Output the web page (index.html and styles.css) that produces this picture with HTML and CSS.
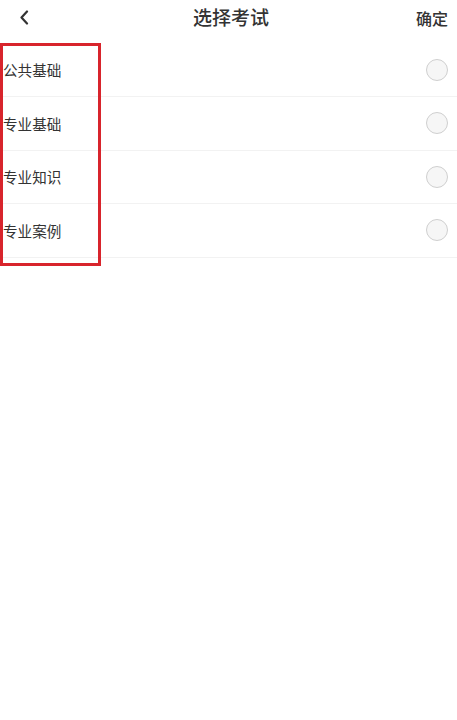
FILE: index.html
```html
<!DOCTYPE html>
<html lang="zh-CN">
<head>
<meta charset="utf-8">
<title>选择考试</title>
<link rel="stylesheet" href="styles.css">
</head>
<body>
<div class="page">
  <header class="header">
    <span class="back">
      <svg width="10" height="15" viewBox="0 0 10 15"><path d="M8 1.5 L2.5 7.5 L8 13.5" fill="none" stroke="#333" stroke-width="2.2" stroke-linecap="round" stroke-linejoin="round"/></svg>
    </span>
    <h1 class="title">选择考试</h1>
    <span class="confirm">确定</span>
  </header>
  <ul class="list">
    <li class="row"><span class="label">公共基础</span><span class="radio"></span></li>
    <li class="row"><span class="label">专业基础</span><span class="radio"></span></li>
    <li class="row"><span class="label">专业知识</span><span class="radio"></span></li>
    <li class="row"><span class="label">专业案例</span><span class="radio"></span></li>
  </ul>
  <div class="highlight"></div>
</div>
</body>
</html>
```

FILE: styles.css
```css
html, body {
  margin: 0;
  padding: 0;
  background: #fff;
}
body {
  font-family: "Noto Sans CJK SC", "Noto Sans", sans-serif;
  color: #333;
}
.page {
  position: relative;
  width: 457px;
  min-height: 720px;
}
.header {
  height: 43.5px;
  box-sizing: border-box;
  padding: 7px 9px 0 19px;
  display: grid;
  grid-template-columns: 1fr auto 1fr;
  align-items: start;
}
.back {
  height: 20px;
  display: flex;
  align-items: center;
}
.back svg {
  display: block;
  margin-top: 1px;
}
.title {
  margin: 0 0 0 -5px;
  font-size: 19px;
  line-height: 20px;
  font-weight: 500;
  color: #333;
}
.confirm {
  justify-self: end;
  font-size: 16px;
  line-height: 22px;
  font-weight: 500;
  color: #333;
}
.list {
  list-style: none;
  margin: 0;
  padding: 0;
}
.row {
  height: 53.5px;
  box-sizing: border-box;
  border-bottom: 1px solid #f2f2f2;
  display: flex;
  align-items: center;
  justify-content: space-between;
  padding: 0 9px 0 3px;
}
.label {
  font-size: 14.6px;
  color: #333;
}
.radio {
  width: 22px;
  height: 22px;
  box-sizing: border-box;
  border-radius: 50%;
  border: 1px solid #cfcfcf;
  background: #f6f6f6;
}
.highlight {
  position: absolute;
  left: 0;
  top: 43px;
  width: 101px;
  height: 223px;
  box-sizing: border-box;
  border: 3px solid #d8242c;
}
```
